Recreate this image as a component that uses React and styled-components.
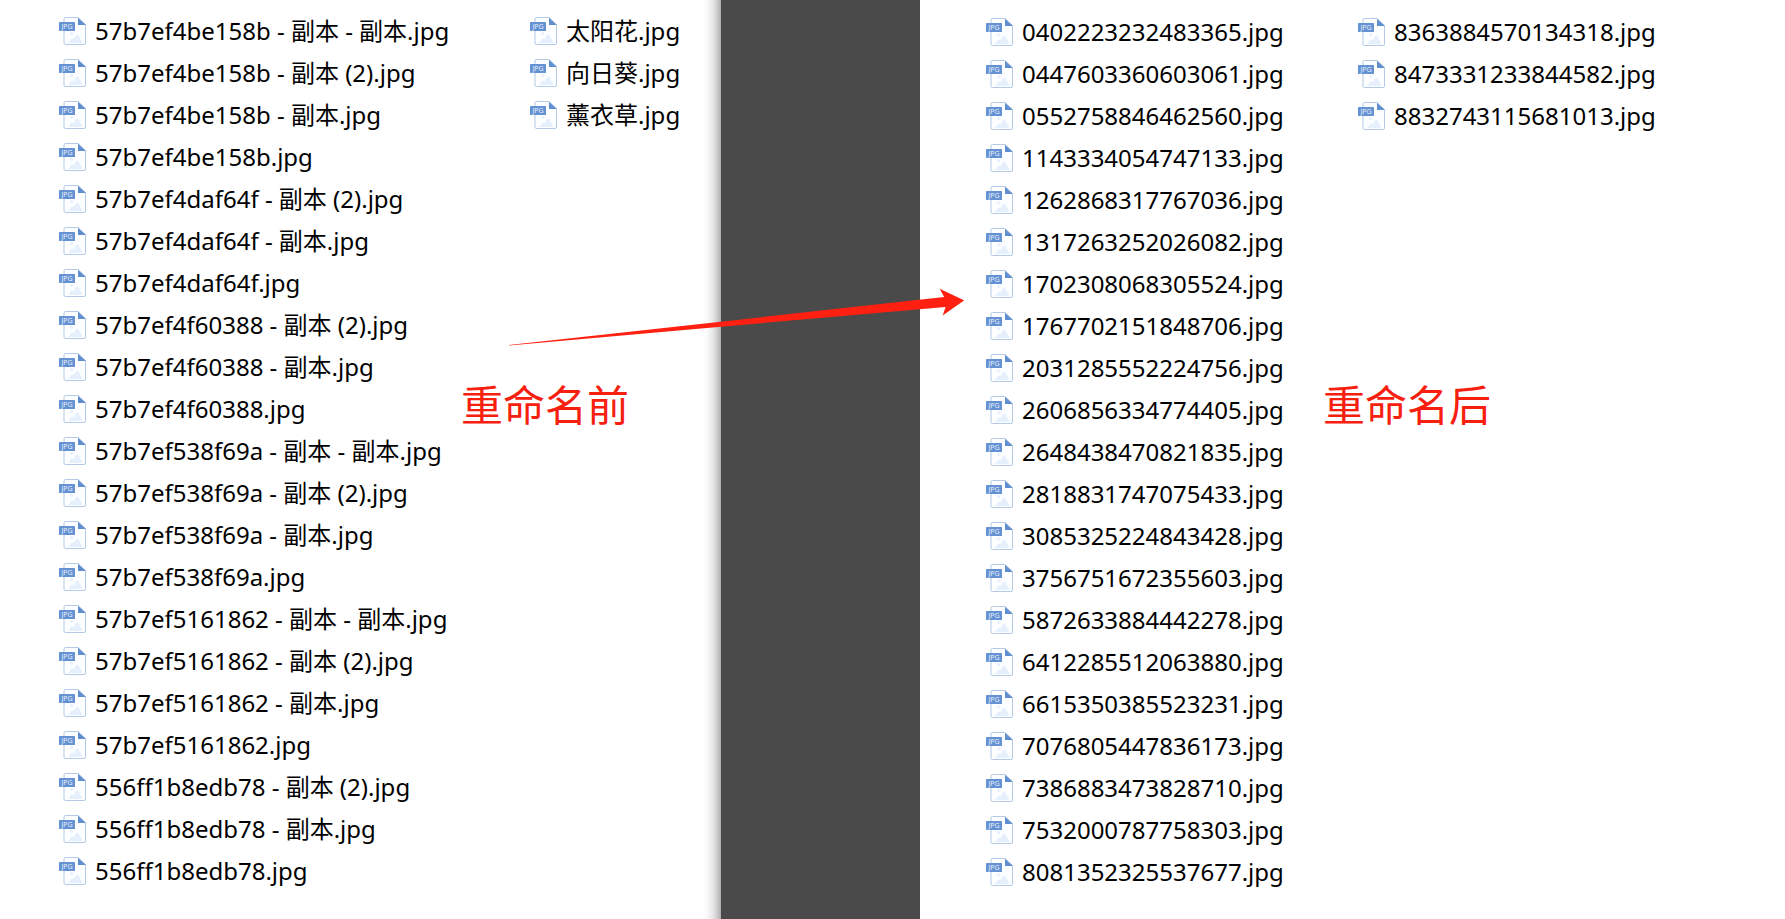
import React from 'react';
import styled, { createGlobalStyle } from 'styled-components';

const GlobalStyle = createGlobalStyle`
  body {
    margin: 0;
    background-color: #fff;
    color: #000;
    font-family: 'Noto Sans', 'Noto Sans CJK SC', sans-serif;
  }
`;

const Page = styled.main`
  position: relative;
  display: grid;
  grid-template-columns: 721fr 199fr 865fr;
  min-height: 100vh;
`;

const Panel = styled.section`
  position: relative;
  box-sizing: border-box;
  display: flex;
  align-items: flex-start;
  padding-top: ${(props) => props.$top}px;
  padding-left: ${(props) => props.$left}px;
  background: ${(props) =>
    props.$shadow
      ? 'linear-gradient(to left, #acacac, #cdcdcd 4px, #e6e6e6 8px, #f7f7f7 13px, #fff 18px)'
      : '#fff'};
`;

const Divider = styled.div`
  background-color: #4a4a4a;
`;

const List = styled.ul`
  flex: none;
  width: ${(props) => props.$width}px;
  margin: 0;
  padding: 0;
  list-style: none;
`;

const Item = styled.li`
  display: flex;
  align-items: center;
  gap: 9px;
  height: 42px;
`;

const Icon = styled.svg`
  flex: none;
  width: 27px;
  height: 28px;
`;

const Name = styled.span`
  font-size: 24px;
  line-height: 42px;
  white-space: nowrap;
`;

const Label = styled.h2`
  position: absolute;
  top: 382px;
  left: ${(props) => props.$left}px;
  margin: 0;
  color: #f7200f;
  font-family: 'Noto Sans CJK SC', sans-serif;
  font-size: 42px;
  font-weight: 400;
  line-height: 42px;
  white-space: nowrap;
`;

const Arrow = styled.svg`
  position: absolute;
  top: 288px;
  left: 28.5%;
  width: 25.5%;
`;

const before = [
  [
    '57b7ef4be158b - 副本 - 副本.jpg',
    '57b7ef4be158b - 副本 (2).jpg',
    '57b7ef4be158b - 副本.jpg',
    '57b7ef4be158b.jpg',
    '57b7ef4daf64f - 副本 (2).jpg',
    '57b7ef4daf64f - 副本.jpg',
    '57b7ef4daf64f.jpg',
    '57b7ef4f60388 - 副本 (2).jpg',
    '57b7ef4f60388 - 副本.jpg',
    '57b7ef4f60388.jpg',
    '57b7ef538f69a - 副本 - 副本.jpg',
    '57b7ef538f69a - 副本 (2).jpg',
    '57b7ef538f69a - 副本.jpg',
    '57b7ef538f69a.jpg',
    '57b7ef5161862 - 副本 - 副本.jpg',
    '57b7ef5161862 - 副本 (2).jpg',
    '57b7ef5161862 - 副本.jpg',
    '57b7ef5161862.jpg',
    '556ff1b8edb78 - 副本 (2).jpg',
    '556ff1b8edb78 - 副本.jpg',
    '556ff1b8edb78.jpg',
  ],
  ['太阳花.jpg', '向日葵.jpg', '薰衣草.jpg'],
];

const after = [
  [
    '0402223232483365.jpg',
    '0447603360603061.jpg',
    '0552758846462560.jpg',
    '1143334054747133.jpg',
    '1262868317767036.jpg',
    '1317263252026082.jpg',
    '1702308068305524.jpg',
    '1767702151848706.jpg',
    '2031285552224756.jpg',
    '2606856334774405.jpg',
    '2648438470821835.jpg',
    '2818831747075433.jpg',
    '3085325224843428.jpg',
    '3756751672355603.jpg',
    '5872633884442278.jpg',
    '6412285512063880.jpg',
    '6615350385523231.jpg',
    '7076805447836173.jpg',
    '7386883473828710.jpg',
    '7532000787758303.jpg',
    '8081352325537677.jpg',
  ],
  ['8363884570134318.jpg', '8473331233844582.jpg', '8832743115681013.jpg'],
];

const JpgIcon = () => {
  return (
    <Icon viewBox="0 0 27 28" aria-hidden="true">
      <path
        d="M6.5 .5H19L26.5 7.5V26a1.5 1.5 0 0 1-1.5 1.5H6.5A1.5 1.5 0 0 1 5 26V2A1.5 1.5 0 0 1 6.5 .5Z"
        fill="#fdfeff"
        stroke="#b3c9e4"
      />
      <path d="M19 .8 26.8 8H19Z" fill="#5f8fce" />
      <circle cx="12.7" cy="16.5" r="1.6" fill="#e6effc" />
      <path d="M9 26 12.5 21.5 14.5 22.3 17.3 18q1-1 2 0L23 24.7q.4 1.3-.7 1.3Z" fill="#e6effc" />
      <rect x="0" y="5" width="16" height="9" rx=".6" fill="#6592d3" />
      <text x="8" y="12" fill="#e6eefa" fontSize="7" textAnchor="middle">
        JPG
      </text>
    </Icon>
  );
};

const FileList = ({ files, width }) => {
  return (
    <List $width={width}>
      {files.map((file) => (
        <Item key={file}>
          <JpgIcon />
          <Name>{file}</Name>
        </Item>
      ))}
    </List>
  );
};

const App = () => {
  return (
    <>
      <GlobalStyle />
      <Page>
        <Panel $top={10} $left={59} $shadow>
          <FileList files={before[0]} width={471} />
          <FileList files={before[1]} width={160} />
          <Label $left={461}>重命名前</Label>
        </Panel>
        <Divider />
        <Panel $top={11} $left={66}>
          <FileList files={after[0]} width={372} />
          <FileList files={after[1]} width={372} />
          <Label $left={403}>重命名后</Label>
        </Panel>
        <Arrow viewBox="0 0 455 58" aria-hidden="true">
          <path d="M0 57 435 9 430.5 .8 455 12.3 433.5 27.5 436.5 19 212 38.7 0 57.6Z" fill="#ff2012" />
        </Arrow>
      </Page>
    </>
  );
};

export default App;
